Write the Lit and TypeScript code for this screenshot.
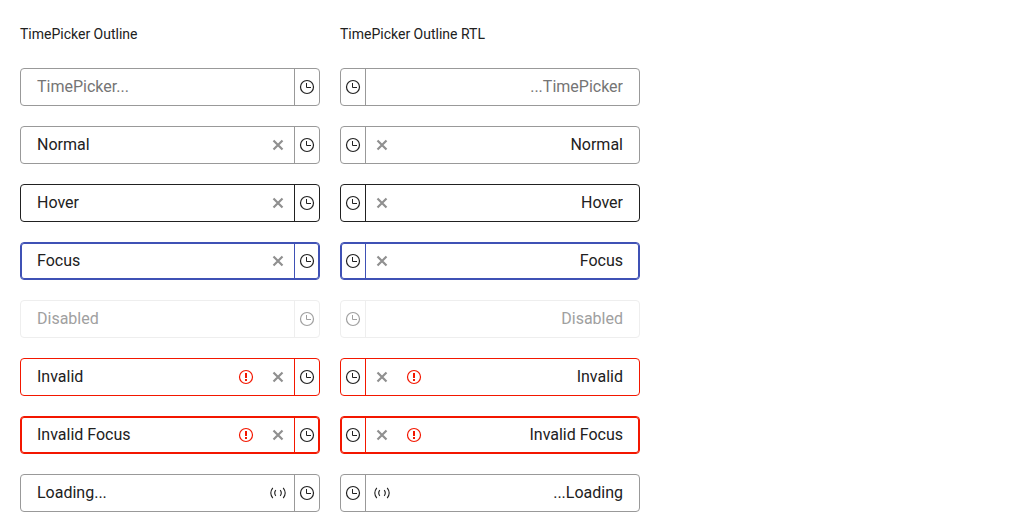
import { LitElement, html, css, svg, nothing } from "lit";
import { customElement, property } from "lit/decorators.js";

type Status = "normal" | "hover" | "focus" | "disabled" | "invalid" | "invalid-focus" | "loading";

interface Sample {
  value: string;
  status: Status;
}

const samples: Sample[] = [
  { value: "", status: "normal" },
  { value: "Normal", status: "normal" },
  { value: "Hover", status: "hover" },
  { value: "Focus", status: "focus" },
  { value: "Disabled", status: "disabled" },
  { value: "Invalid", status: "invalid" },
  { value: "Invalid Focus", status: "invalid-focus" },
  { value: "Loading...", status: "loading" },
];

const icon = (content: unknown) => html`
  <svg viewBox="0 0 16 16" width="16" height="16" aria-hidden="true">${content}</svg>
`;

const clockIcon = icon(svg`
  <circle cx="8" cy="8" r="6.5" fill="none" stroke="currentColor" stroke-width="1.2" />
  <path d="M7.5 4v4.5H12" fill="none" stroke="currentColor" />
`);

const clearIcon = icon(svg`
  <path d="M3.5 3.5l9 9M12.5 3.5l-9 9" fill="none" stroke="currentColor" stroke-width="2.2" />
`);

const warningIcon = icon(svg`
  <circle cx="8" cy="8" r="6.5" fill="none" stroke="currentColor" stroke-width="1.2" />
  <path d="M7 4h2v5H7zM7 10h2v2H7z" fill="currentColor" />
`);

const loadingIcon = icon(svg`
  <path d="M2.8 2.8Q-1.2 8 2.8 13.2M13.2 2.8Q17.2 8 13.2 13.2M5.8 5.2Q3.6 8 5.8 10.8M10.2 5.2Q12.4 8 10.2 10.8"
    fill="none" stroke="currentColor" stroke-width="1.1" />
`);

@customElement("time-picker")
export class TimePicker extends LitElement {
  @property() value = "";
  @property() status: Status = "normal";
  @property() direction: "ltr" | "rtl" = "ltr";

  static styles = css`
    :host {
      display: block;
    }
    .picker {
      display: flex;
      box-sizing: border-box;
      height: 38px;
      border: 1px solid var(--line);
      border-radius: 4px;
      background: #fff;
      color: #212121;
      --line: #999;
    }
    .hover {
      --line: #212121;
    }
    .focus {
      --line: #3f51b5;
      box-shadow: inset 0 0 0 1px var(--line);
    }
    .disabled {
      --line: #eee;
      color: #a0a0a0;
    }
    .invalid,
    .invalid-focus {
      --line: #f31700;
    }
    .invalid-focus {
      box-shadow: inset 0 0 0 1px var(--line);
    }
    .input {
      flex: 1;
      min-width: 0;
      box-sizing: border-box;
      border: 0;
      outline: 0;
      padding: 0 16px;
      background: none;
      color: inherit;
      font: 16px/24px Roboto, sans-serif;
    }
    .input::placeholder {
      color: #757575;
      opacity: 1;
    }
    .button,
    .mark {
      display: flex;
      flex: none;
      align-items: center;
      justify-content: center;
      box-sizing: border-box;
      width: 32px;
      padding: 0;
      border: 0;
      background: none;
      color: inherit;
    }
    .clear {
      color: #909090;
    }
    .warning {
      color: #f31700;
    }
    .trigger {
      width: 25px;
      border-inline-start: 1px solid var(--line);
    }
  `;

  render() {
    const invalid = this.status.startsWith("invalid");
    const disabled = this.status === "disabled";
    const loading = this.status === "loading";
    return html`
      <div class="picker ${this.status}" dir=${this.direction}>
        <input
          class="input"
          aria-label="Time"
          aria-invalid=${invalid}
          placeholder="TimePicker..."
          .value=${this.value}
          ?disabled=${disabled}
        />
        ${invalid ? html`<span class="mark warning">${warningIcon}</span>` : nothing}
        ${this.value && !disabled && !loading
          ? html`<button class="button clear" type="button" aria-label="Clear">${clearIcon}</button>`
          : nothing}
        ${loading ? html`<span class="mark">${loadingIcon}</span>` : nothing}
        <button class="button trigger" type="button" aria-label="Open time list" ?disabled=${disabled}>
          ${clockIcon}
        </button>
      </div>
    `;
  }
}

@customElement("app-root")
export class AppRoot extends LitElement {
  static styles = css`
    :host {
      display: block;
      padding: 20px;
      background: #fff;
      color: #212121;
      font-family: Roboto, sans-serif;
    }
    .columns {
      display: grid;
      grid-template-columns: repeat(2, minmax(0, 300px));
      gap: 20px;
    }
    .column {
      display: flex;
      flex-direction: column;
      gap: 20px;
    }
    .title {
      margin: 0;
      font-size: 14px;
      font-weight: 400;
      line-height: 28px;
    }
  `;

  private column(title: string, direction: "ltr" | "rtl") {
    return html`
      <section class="column">
        <h2 class="title">${title}</h2>
        ${samples.map(
          (s) => html`<time-picker .value=${s.value} .status=${s.status} .direction=${direction}></time-picker>`
        )}
      </section>
    `;
  }

  render() {
    return html`
      <main class="columns">
        ${this.column("TimePicker Outline", "ltr")} ${this.column("TimePicker Outline RTL", "rtl")}
      </main>
    `;
  }
}
